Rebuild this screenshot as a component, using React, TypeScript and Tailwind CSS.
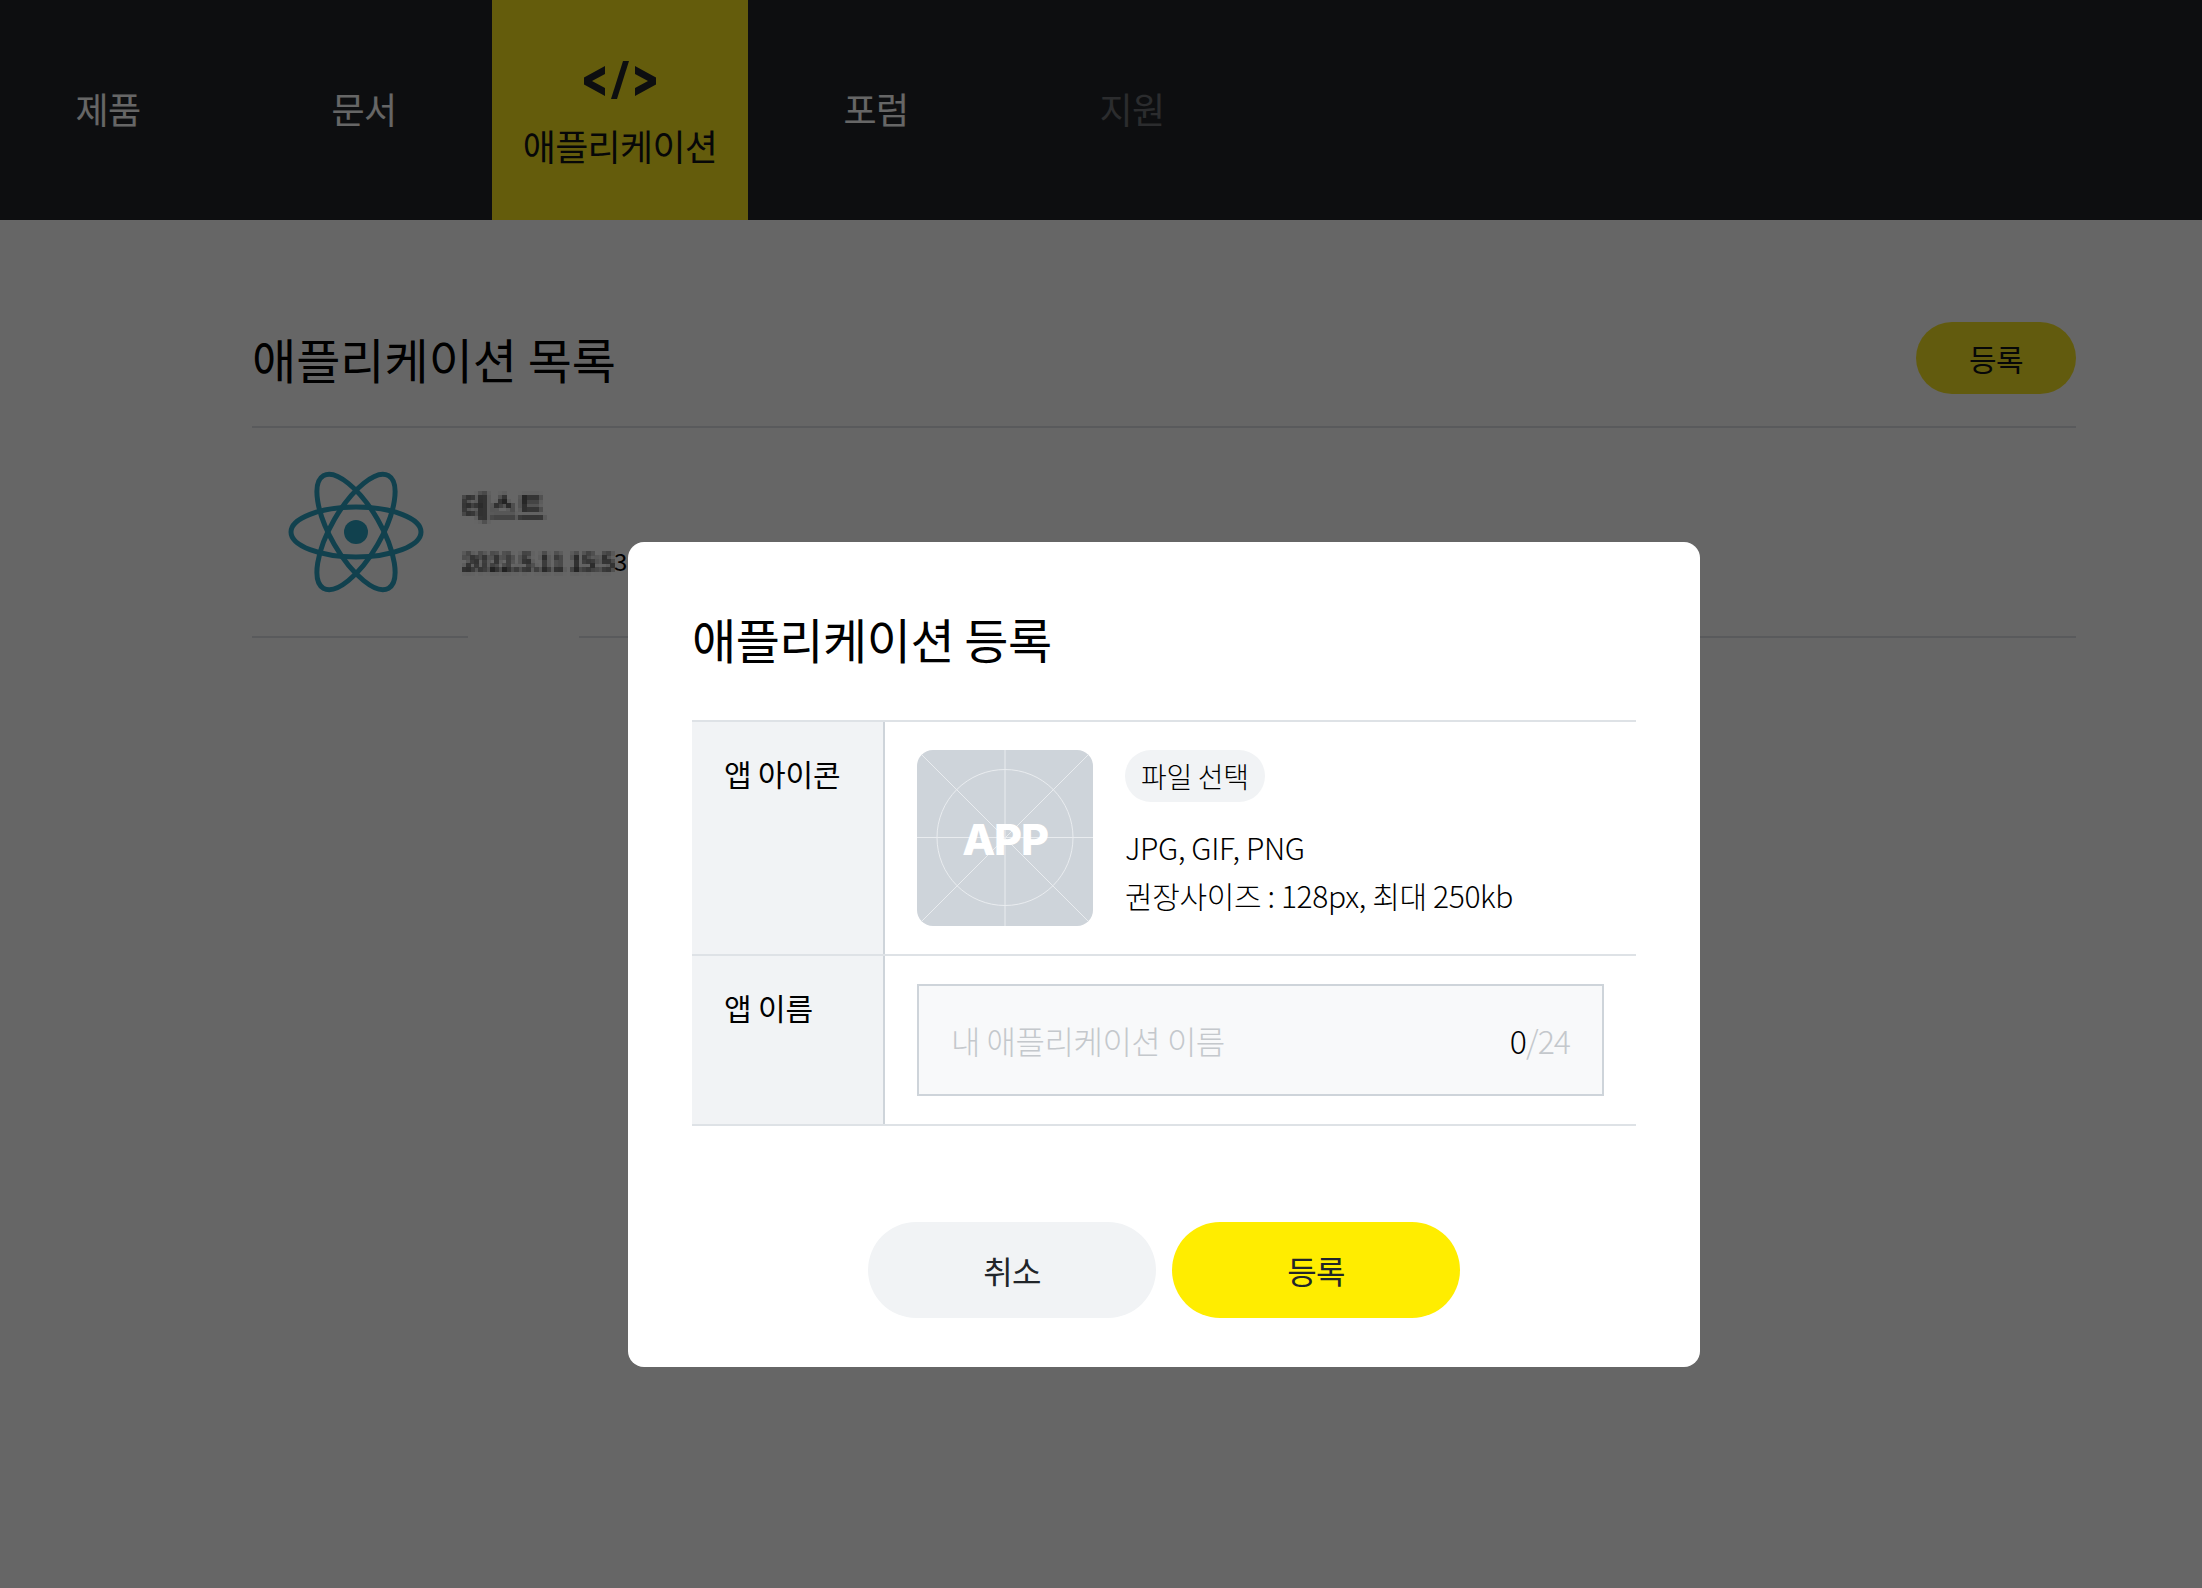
const navItems = [
  { label: "제품", cls: "text-white" },
  { label: "문서", cls: "text-white" },
  { label: "애플리케이션", cls: "text-[#111315]", active: true },
  { label: "포럼", cls: "text-white" },
  { label: "지원", cls: "text-[#6c6f73]" },
];

function CodeIcon() {
  return (
    <svg width="74" height="38" viewBox="0 0 74 38" fill="#212529" className="block">
      <polygon points="22,5 22,13 9,20 22,27 22,35 1,23.5 1,16.5" />
      <polygon points="52,5 52,13 65,20 52,27 52,35 73,23.5 73,16.5" />
      <polygon points="40,0 46,0 34,38 28,38" />
    </svg>
  );
}

function ReactLogo() {
  return (
    <svg width="136" height="122" viewBox="-68 -61 136 122" fill="none" stroke="#2ba4c4" strokeWidth="5">
      <ellipse rx="65" ry="25" />
      <ellipse rx="65" ry="25" transform="rotate(60)" />
      <ellipse rx="65" ry="25" transform="rotate(120)" />
      <circle r="12" fill="#2ba4c4" stroke="none" />
    </svg>
  );
}

function AppPlaceholder() {
  return (
    <svg width="176" height="176" viewBox="0 0 176 176" className="rounded-2xl bg-[#ced4da] shrink-0">
      <g stroke="#e9ecef" strokeWidth="1" fill="none">
        <line x1="0" y1="0" x2="176" y2="176" />
        <line x1="176" y1="0" x2="0" y2="176" />
        <line x1="88" y1="0" x2="88" y2="176" />
        <line x1="0" y1="87.5" x2="176" y2="87.5" />
        <circle cx="88" cy="87.5" r="68" />
      </g>
      <text x="88" y="105" textAnchor="middle" fill="#fff" fontFamily="Inter, sans-serif" fontWeight="800" fontSize="43" letterSpacing="-1.2">
        APP
      </text>
    </svg>
  );
}

// the app name and date are mosaicked in the screenshot
function MosaicFilter() {
  return (
    <svg width="0" height="0" className="absolute">
      <filter id="mosaic" x="0" y="0" width="1" height="1">
        <feGaussianBlur in="SourceGraphic" stdDeviation="1.4" result="soft" />
        <feFlood x="2" y="2" width="1" height="1" />
        <feComposite width="4" height="4" />
        <feTile result="grid" />
        <feComposite in="soft" in2="grid" operator="in" />
        <feMorphology operator="dilate" radius="2" />
      </filter>
    </svg>
  );
}

export default function App() {
  return (
    <div className="relative w-[2202px] h-[1588px] overflow-hidden bg-white text-[#212529] font-['Noto_Sans_CJK_KR','Noto_Sans',sans-serif]">
      <MosaicFilter />
      <nav className="h-[220px] bg-[#212529] flex -ml-5">
        {navItems.map((item) => (
          <a
            key={item.label}
            className={`w-64 flex flex-col items-center justify-center text-4xl tracking-[-0.02em] ${item.cls} ${item.active ? "bg-[#fbe61e] pt-[12px]" : "pb-[4px]"}`}
          >
            {item.active && (
              <span className="mb-[20px]">
                <CodeIcon />
              </span>
            )}
            <span className="leading-[52px]">{item.label}</span>
          </a>
        ))}
      </nav>

      <main className="pl-[252px] pr-[126px]">
        <div className="flex items-center justify-between h-[208px] border-b-2 border-[#dee2e6] pt-[70px]">
          <h1 className="text-5xl font-normal tracking-normal text-black">애플리케이션 목록</h1>
          <button className="w-40 h-[72px] rounded-full bg-[#f6e324] text-[#111315] text-[30px] tracking-[-0.02em]">등록</button>
        </div>
        <div className="flex items-center h-[208px]">
          <div className="ml-[36px] mr-[38px] flex">
            <ReactLogo />
          </div>
          <div className="flex flex-col gap-[20px] pt-[2px] text-black">
            <p className="text-[30px] leading-[36px] filter-[url(#mosaic)]">테스트</p>
            <p className="text-2xl leading-[36px] tracking-[-0.02em]">
              <span className="filter-[url(#mosaic)]">2022.5.11 15:5</span>3
            </p>
          </div>
        </div>
        <div className="flex gap-[111px]">
          <div className="w-[216px] h-[2px] bg-[#dee2e6]" />
          <div className="flex-1 h-[2px] bg-[#dee2e6]" />
        </div>
      </main>

      <div className="absolute inset-0 bg-black/60" />

      <section className="absolute left-[628px] top-[542px] w-[1072px] h-[825px] rounded-2xl bg-white px-16 pt-[67px]">
        <h2 className="text-5xl leading-[58px] font-normal tracking-[-0.01em] text-black">애플리케이션 등록</h2>

        <div className="mt-[53px] border-t-2 border-[#dee2e6]">
          <div className="flex h-[234px] border-b-2 border-[#dee2e6]">
            <div className="w-[193px] shrink-0 bg-[#f1f3f5] border-r-2 border-[#ced4da] pl-8 pt-[31px] text-[30px] leading-[40px] tracking-[-0.005em] text-black">
              앱 아이콘
            </div>
            <div className="flex gap-8 pl-8 pt-[28px]">
              <AppPlaceholder />
              <div className="text-black">
                <button className="h-[52px] px-4 rounded-full bg-[#f1f3f5] text-[28px] font-light tracking-[-0.01em]">파일 선택</button>
                <div className="mt-[21px] text-[30px] font-light leading-[48px] tracking-[-0.012em]">
                  <p>JPG, GIF, PNG</p>
                  <p>권장사이즈 : 128px, 최대 250kb</p>
                </div>
              </div>
            </div>
          </div>
          <div className="flex h-[170px] border-b-2 border-[#dee2e6]">
            <div className="w-[193px] shrink-0 bg-[#f1f3f5] border-r-2 border-[#ced4da] pl-8 pt-[31px] text-[30px] leading-[40px] tracking-[-0.005em] text-black">
              앱 이름
            </div>
            <div className="flex-1 pl-8 pr-[32px] pt-[28px]">
              <div className="h-[112px] border-2 border-[#ced4da] bg-[#f8f9fa] flex items-center justify-between px-8 text-[32px] font-light tracking-[-0.015em]">
                <span className="text-[#c4c8cc]">내 애플리케이션 이름</span>
                <span className="text-[#c4c8cc] tracking-[-0.03em]">
                  <span className="text-black">0</span>/24
                </span>
              </div>
            </div>
          </div>
        </div>

        <div className="mt-[96px] flex justify-center gap-4">
          <button className="w-72 h-24 rounded-full bg-[#f1f3f5] text-[32px] tracking-[-0.02em]">취소</button>
          <button className="w-72 h-24 rounded-full bg-[#ffed00] text-[32px] tracking-[-0.02em]">등록</button>
        </div>
      </section>
    </div>
  );
}
